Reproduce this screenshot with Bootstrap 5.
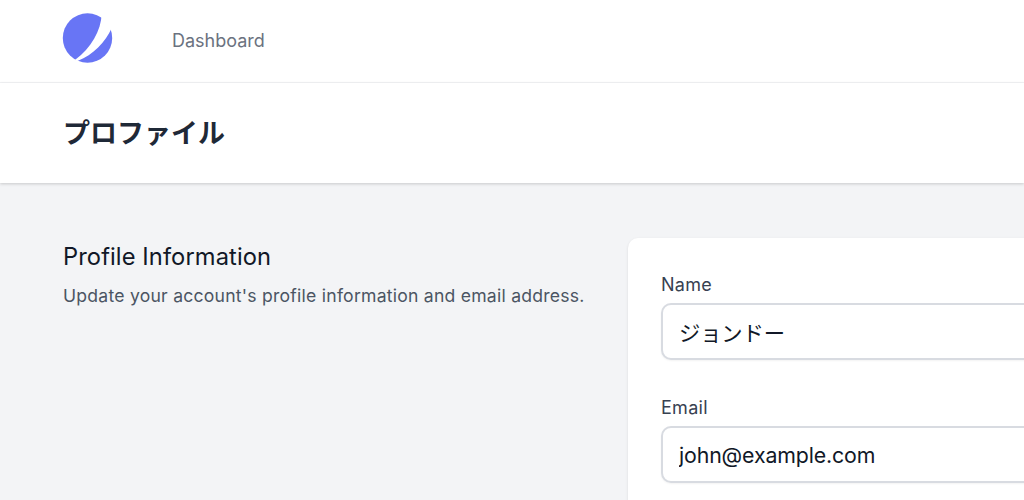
<!DOCTYPE html>
<html lang="ja">
<head>
<meta charset="utf-8">
<title>プロファイル</title>
<link href="https://cdn.jsdelivr.net/npm/bootstrap@5.3.0/dist/css/bootstrap.min.css" rel="stylesheet">
<style>
html,body{height:500px;overflow:hidden}
body{font-family:Inter,"Noto Sans CJK JP",sans-serif;background:#f3f4f6;color:#111827}
.top-bar{height:83px;background:#fff;border-bottom:1.6px solid #f3f4f6;padding-left:62px}
.brand-mark{width:52px;height:52px;display:block;margin-top:12px}
.nav-text{margin-left:58px;margin-top:-2px;font-size:18px;color:#6b7280;text-decoration:none}
.head-bar{height:100px;background:#fff;padding-left:63px;box-shadow:0 1px 3px rgba(0,0,0,.18)}
.head-title{font-size:27px;font-weight:700;color:#1f2937;margin:0;line-height:1}
.main-area{padding:55px 0 0 63px;width:1400px}
.info-col{width:565px;flex:none}
.info-title{font-size:23.7px;letter-spacing:.1px;font-weight:400;color:#111827;line-height:38px;margin:0}
.info-text{font-size:17.6px;letter-spacing:.23px;color:#4b5563;margin:8px 0 0;line-height:24px}
.form-panel{width:700px;flex:none;background:#fff;border-radius:10px;padding:34px 33px;box-shadow:0 1px 3px rgba(0,0,0,.1)}
.field-label{display:block;font-size:18px;letter-spacing:.3px;font-weight:400;color:#374151;line-height:26px;margin-bottom:5px}
.field-input{height:57px;border:2px solid #d8dbe1;border-radius:10px;font-size:21.3px;letter-spacing:-.12px;padding:0 16px;color:#111827;box-shadow:0 1px 2px rgba(0,0,0,.05)}
.field-gap{margin-top:35px}
</style>
</head>
<body>
<nav class="top-bar d-flex align-items-start">
<svg class="brand-mark" viewBox="0 0 52 52" aria-label="Logo">
<circle cx="25.5" cy="26" r="24.7" fill="#6875f5"/>
<path d="M39.7 2C39 19 29 36 13.5 47.5L12 50L16 48.7C31 43 43.5 30 49.7 16L54 0Z" fill="#fff"/>
</svg>
<a class="nav-text align-self-center" href="#">Dashboard</a>
</nav>
<header class="head-bar d-flex align-items-center">
<h1 class="head-title">プロファイル</h1>
</header>
<main class="main-area d-flex">
<section class="info-col">
<h2 class="info-title">Profile Information</h2>
<p class="info-text">Update your account's profile information and email address.</p>
</section>
<form class="form-panel">
<div>
<label class="field-label" for="nm">Name</label>
<input id="nm" class="form-control field-input" value="ジョンドー">
</div>
<div class="field-gap">
<label class="field-label" for="em">Email</label>
<input id="em" class="form-control field-input" value="john@example.com">
</div>
</form>
</main>
</body>
</html>
